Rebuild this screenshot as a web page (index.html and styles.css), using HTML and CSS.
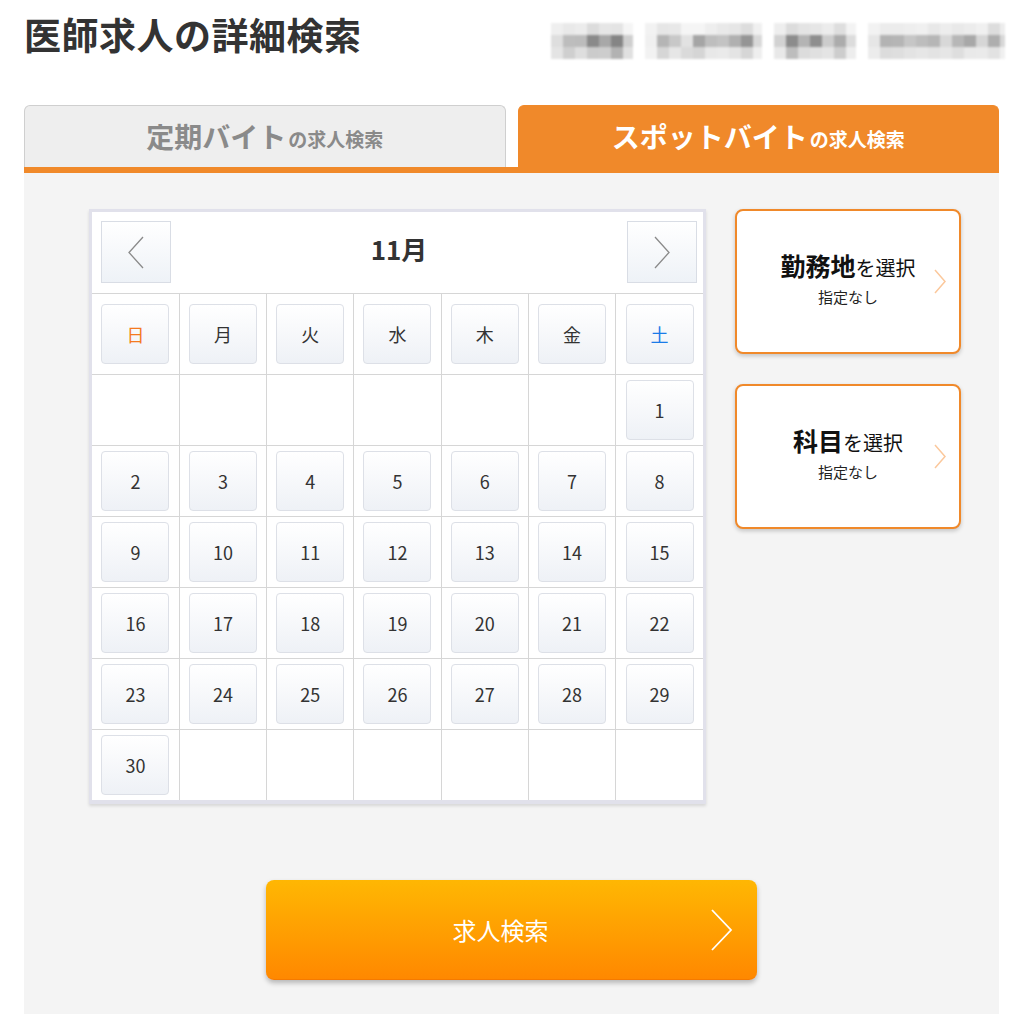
FILE: index.html
```html
<!DOCTYPE html>
<html lang="ja">
  <head>
    <meta charset="UTF-8">
    <meta name="viewport" content="width=device-width, initial-scale=1.0">
    <title>医師求人の詳細検索</title>
    <link rel="stylesheet" href="styles.css">
  </head>
  <body>

    <!-- Page header -->
    <div class="header">
      <h1>医師求人の詳細検索</h1>
      <div class="blurred">
        <div class="blur-group g1"><div class="r1"></div><div class="r2"></div><div class="r3"></div></div>
        <div class="blur-group g2"><div class="r1"></div><div class="r2"></div><div class="r3"></div></div>
        <div class="blur-group g3"><div class="r1"></div><div class="r2"></div><div class="r3"></div></div>
        <div class="blur-group g4"><div class="r1"></div><div class="r2"></div><div class="r3"></div></div>
      </div>
    </div>

    <!-- Tabs -->
    <div class="tabs">
      <a href="#" class="tab">定期バイト<small>の求人検索</small></a>
      <a href="#" class="tab active">スポットバイト<small>の求人検索</small></a>
    </div>
    <div class="tab-bar"></div>

    <!-- Search panel -->
    <div class="panel">
      <div class="panel-row">

        <div class="calendar">
          <div class="cal-head">
            <a href="#" class="nav">
              <svg width="18" height="33" viewBox="0 0 18 33"><polyline points="16,1 2,16.5 16,32" fill="none" stroke="#8a8a8a" stroke-width="1.3"/></svg>
            </a>
            <span class="month">11月</span>
            <a href="#" class="nav">
              <svg width="18" height="33" viewBox="0 0 18 33"><polyline points="2,1 16,16.5 2,32" fill="none" stroke="#8a8a8a" stroke-width="1.3"/></svg>
            </a>
          </div>
          <table class="days">
            <tr class="week">
              <td><div class="day sun">日</div></td>
              <td><div class="day">月</div></td>
              <td><div class="day">火</div></td>
              <td><div class="day">水</div></td>
              <td><div class="day">木</div></td>
              <td><div class="day">金</div></td>
              <td><div class="day sat">土</div></td>
            </tr>
            <tr>
              <td></td><td></td><td></td><td></td><td></td><td></td>
              <td><div class="day">1</div></td>
            </tr>
            <tr>
              <td><div class="day">2</div></td>
              <td><div class="day">3</div></td>
              <td><div class="day">4</div></td>
              <td><div class="day">5</div></td>
              <td><div class="day">6</div></td>
              <td><div class="day">7</div></td>
              <td><div class="day">8</div></td>
            </tr>
            <tr>
              <td><div class="day">9</div></td>
              <td><div class="day">10</div></td>
              <td><div class="day">11</div></td>
              <td><div class="day">12</div></td>
              <td><div class="day">13</div></td>
              <td><div class="day">14</div></td>
              <td><div class="day">15</div></td>
            </tr>
            <tr>
              <td><div class="day">16</div></td>
              <td><div class="day">17</div></td>
              <td><div class="day">18</div></td>
              <td><div class="day">19</div></td>
              <td><div class="day">20</div></td>
              <td><div class="day">21</div></td>
              <td><div class="day">22</div></td>
            </tr>
            <tr>
              <td><div class="day">23</div></td>
              <td><div class="day">24</div></td>
              <td><div class="day">25</div></td>
              <td><div class="day">26</div></td>
              <td><div class="day">27</div></td>
              <td><div class="day">28</div></td>
              <td><div class="day">29</div></td>
            </tr>
            <tr>
              <td><div class="day">30</div></td>
              <td></td><td></td><td></td><td></td><td></td><td></td>
            </tr>
          </table>
        </div>

        <div class="options">
          <a href="#" class="option">
            <span></span>
            <span class="option-text">
              <span class="option-title"><b>勤務地</b>を選択</span>
              <span class="option-value">指定なし</span>
            </span>
            <svg width="12" height="25" viewBox="0 0 12 25"><polyline points="1,1 11,12.5 1,24" fill="none" stroke="#fbc89c" stroke-width="1.5"/></svg>
          </a>
          <a href="#" class="option">
            <span></span>
            <span class="option-text">
              <span class="option-title"><b>科目</b>を選択</span>
              <span class="option-value">指定なし</span>
            </span>
            <svg width="12" height="25" viewBox="0 0 12 25"><polyline points="1,1 11,12.5 1,24" fill="none" stroke="#fbc89c" stroke-width="1.5"/></svg>
          </a>
        </div>

      </div>

      <button type="button" class="search-btn">
        <span>求人検索</span>
        <svg width="22" height="42" viewBox="0 0 22 42"><polyline points="1,1 20,21 1,41" fill="none" stroke="#fff" stroke-width="1.8"/></svg>
      </button>
    </div>

  </body>
</html>
```

FILE: styles.css
```css
body {
  font-family: "Noto Sans CJK JP", "Noto Sans", sans-serif;
  margin: 0;
  padding: 0;
  background-color: #fff;
  color: #333;
}
a {
  text-decoration: none;
  color: inherit;
}
.header {
  display: flex;
  justify-content: space-between;
  align-items: flex-start;
  height: 53px;
  box-sizing: border-box;
  padding: 16px 15px 0 24px;
}
h1 {
  margin: 0;
  font-size: 37px;
  line-height: 37px;
  font-weight: bold;
  color: #333;
  letter-spacing: 0.5px;
}
.blurred {
  display: flex;
  gap: 12px;
  margin-top: 7px;
  filter: blur(1.2px);
}
.blur-group div {
  height: 12px;
}
.g1 { width: 82px; }
.g2 { width: 117px; }
.g3 { width: 82px; }
.g4 { width: 137px; }
.g1 .r1 { background: linear-gradient(to right, #efefef 0 12px, #e9e9e9 12px 24px, #ececec 24px 36px, #dcdcdc 36px 48px, #e6e6e6 48px 60px, #e4e4e4 60px 72px, #f5f5f5 72px); }
.g1 .r2 { background: linear-gradient(to right, #dedede 0 12px, #bdbdbd 12px 24px, #bcbcbc 24px 36px, #8a8a8a 36px 48px, #a8a8a8 48px 60px, #858585 60px 72px, #cfcfcf 72px); }
.g1 .r3 { background: linear-gradient(to right, #e4e4e4 0 12px, #cfcfcf 12px 24px, #dedede 24px 36px, #cbcbcb 36px 48px, #cdcdcd 48px 60px, #b2b2b2 60px 72px, #e0e0e0 72px); }
.g2 .r1 { background: linear-gradient(to right, #f2f2f2 0 12px, #e6e6e6 12px 24px, #e8e8e8 24px 36px, #f5f5f5 36px 48px, #f5f5f5 48px 60px, #eeeeee 60px 72px, #e9e9e9 72px 84px, #e6e6e6 84px 96px, #dddddd 96px 108px, #f0f0f0 108px); }
.g2 .r2 { background: linear-gradient(to right, #f0f0f0 0 12px, #b5b5b5 12px 24px, #c8c8c8 24px 36px, #e2e2e2 36px 48px, #a5a5a5 48px 60px, #bebebe 60px 72px, #c3c3c3 72px 84px, #b0b0b0 84px 96px, #959595 96px 108px, #d8d8d8 108px); }
.g2 .r3 { background: linear-gradient(to right, #f2f2f2 0 12px, #d6d6d6 12px 24px, #e6e6e6 24px 36px, #dadada 36px 48px, #d5d5d5 48px 60px, #e8e8e8 60px 72px, #eaeaea 72px 84px, #e4e4e4 84px 96px, #d6d6d6 96px 108px, #eeeeee 108px); }
.g3 .r1 { background: linear-gradient(to right, #eeeeee 0 12px, #dcdcdc 12px 24px, #e4e4e4 24px 36px, #e6e6e6 36px 48px, #ececec 48px 60px, #dedede 60px 72px, #f3f3f3 72px); }
.g3 .r2 { background: linear-gradient(to right, #d2d2d2 0 12px, #8c8c8c 12px 24px, #b4b4b4 24px 36px, #8e8e8e 36px 48px, #cccccc 48px 60px, #acacac 60px 72px, #dcdcdc 72px); }
.g3 .r3 { background: linear-gradient(to right, #e8e8e8 0 12px, #bdbdbd 12px 24px, #dcdcdc 24px 36px, #e0e0e0 36px 48px, #e4e4e4 48px 60px, #cdcdcd 60px 72px, #ededed 72px); }
.g4 .r1 { background: linear-gradient(to right, #f2f2f2 0 12px, #ececec 12px 24px, #ececec 24px 36px, #eeeeee 36px 48px, #f0f0f0 48px 60px, #e8e8e8 60px 72px, #ededed 72px 84px, #e9e9e9 84px 96px, #ececec 96px 108px, #f0f0f0 108px 120px, #dddddd 120px 132px, #ededed 132px); }
.g4 .r2 { background: linear-gradient(to right, #e6e6e6 0 12px, #b3b3b3 12px 24px, #b5b5b5 24px 36px, #c6c6c6 36px 48px, #bdbdbd 48px 60px, #b6b6b6 60px 72px, #d8d8d8 72px 84px, #b7b7b7 84px 96px, #a8a8a8 96px 108px, #d6d6d6 108px 120px, #aeaeae 120px 132px, #d8d8d8 132px); }
.g4 .r3 { background: linear-gradient(to right, #ececec 0 12px, #dcdcdc 12px 24px, #dedede 24px 36px, #e3e3e3 36px 48px, #e6e6e6 48px 60px, #e3e3e3 60px 72px, #e6e6e6 72px 84px, #dedede 84px 96px, #e9e9e9 96px 108px, #eaeaea 108px 120px, #e2e2e2 120px 132px, #f0f0f0 132px); }

/* Tabs */
.tabs {
  display: flex;
  gap: 12px;
  margin: 52px 21px 0 24px;
}
.tab {
  flex: 1;
  height: 62px;
  box-sizing: border-box;
  display: flex;
  align-items: center;
  justify-content: center;
  border-radius: 6px 6px 0 0;
  font-size: 28px;
  font-weight: bold;
  background-color: #eeeeee;
  border: 1px solid #cfcfcf;
  border-bottom: none;
  color: #8a8a8a;
  padding-bottom: 2px;
}
.tab small {
  font-size: 19px;
  margin-top: 6px;
  margin-left: 2px;
}
.tab.active {
  background-color: #f0892a;
  border-color: #f0892a;
  color: #fff;
}
.tab-bar {
  height: 6px;
  margin: 0 21px 0 24px;
  background-color: #f0892a;
}

/* Panel */
.panel {
  margin: 0 21px 0 24px;
  padding: 36px 0 34px 0;
  background-color: #f4f4f4;
}
.panel-row {
  display: flex;
  align-items: flex-start;
  gap: 29px;
  padding-left: 65px;
}

/* Calendar */
.calendar {
  width: 617px;
  box-sizing: border-box;
  background-color: #fff;
  border: 3px solid #e1e1eb;
  border-bottom-width: 4px;
  box-shadow: 0 2px 3px rgba(0, 0, 0, 0.12);
}
.cal-head {
  height: 81px;
  box-sizing: border-box;
  padding: 9px 6px 10px 9px;
  display: flex;
  justify-content: space-between;
  align-items: center;
}
.nav {
  width: 70px;
  height: 62px;
  box-sizing: border-box;
  border: 1px solid #d9dde5;
  background: linear-gradient(#ffffff, #eef2f7);
  display: flex;
  align-items: center;
  justify-content: center;
}
.month {
  font-size: 26px;
  font-weight: bold;
  color: #333;
  margin-bottom: 7px;
}
.days {
  width: 100%;
  border-collapse: collapse;
  table-layout: fixed;
}
.days td {
  border: 1px solid #d6d6d6;
  height: 70px;
  padding: 0;
  vertical-align: middle;
}
.days .week td {
  height: 80px;
}
.days tr td:first-child {
  border-left: none;
}
.days tr td:last-child {
  border-right: none;
}
.days tr:last-child td {
  border-bottom: none;
}
.day {
  width: 68px;
  height: 60px;
  margin: 0 auto;
  box-sizing: border-box;
  border: 1px solid #dde0e7;
  border-radius: 4px;
  background: linear-gradient(#ffffff, #eef1f6);
  display: flex;
  align-items: center;
  justify-content: center;
  font-size: 18px;
  color: #333;
}
.day.sun {
  color: #f47a1f;
}
.day.sat {
  color: #1a7be8;
}

/* Options */
.options {
  width: 226px;
  display: flex;
  flex-direction: column;
  gap: 30px;
}
.option {
  height: 145px;
  box-sizing: border-box;
  border: 2px solid #f0892a;
  border-radius: 8px;
  background-color: #fff;
  box-shadow: 0 2px 4px rgba(0, 0, 0, 0.2);
  display: grid;
  grid-template-columns: 12px 1fr 12px;
  align-items: center;
  padding: 0 13px;
}
.option-text {
  display: flex;
  flex-direction: column;
  align-items: center;
  margin-top: -6px;
}
.option-title {
  font-size: 20px;
  color: #111;
  line-height: 34px;
}
.option-title b {
  font-size: 25px;
}
.option-value {
  font-size: 15px;
  color: #222;
  line-height: 24px;
}

/* Search button */
.search-btn {
  display: flex;
  align-items: center;
  width: 491px;
  height: 100px;
  margin: 76px auto 0;
  padding: 0 24px;
  border: none;
  border-bottom: 1px solid #f57a00;
  border-radius: 8px;
  background: linear-gradient(#ffb703, #ff8800);
  box-shadow: 0 3px 5px rgba(0, 0, 0, 0.25);
  color: #fff;
  font-family: inherit;
  font-size: 24px;
  cursor: pointer;
}
.search-btn span {
  flex: 1;
  text-align: center;
}
```
